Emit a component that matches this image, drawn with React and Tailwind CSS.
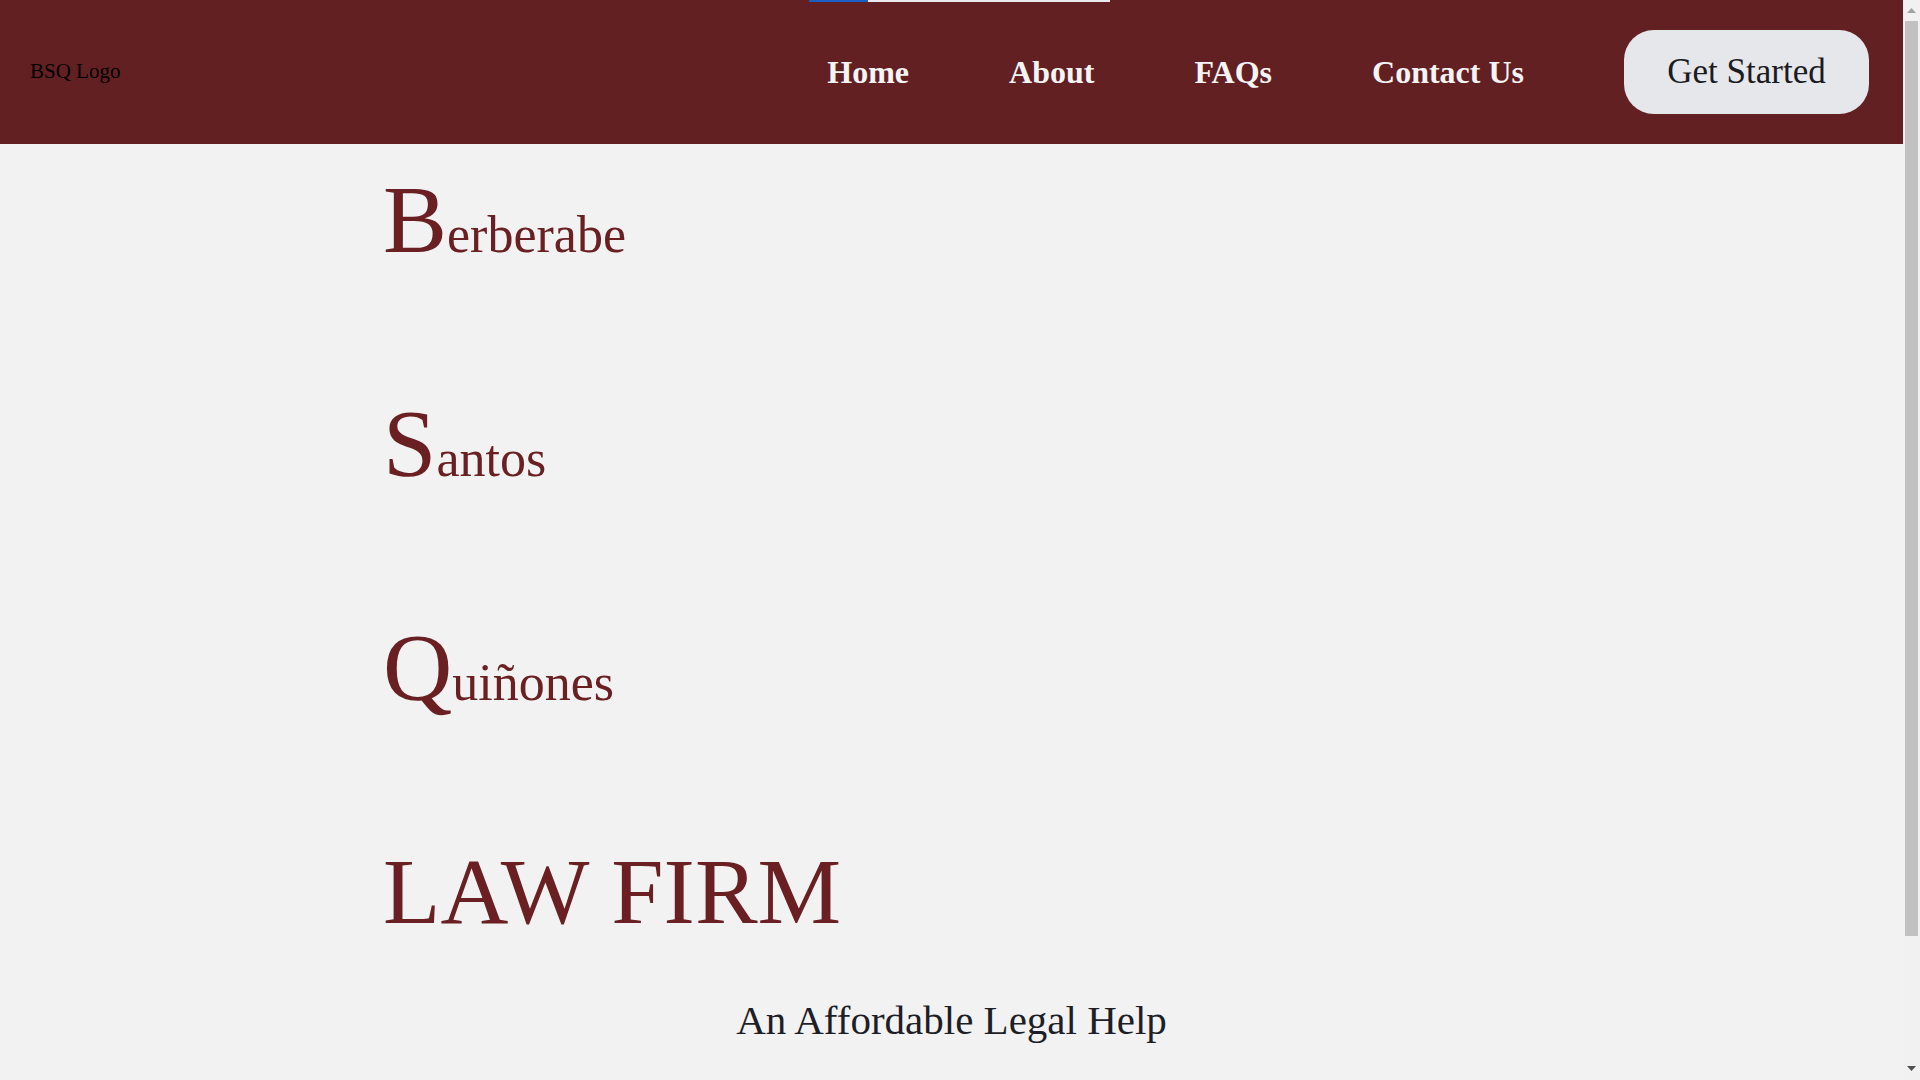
import React from 'react'

const navLinks = ['Home', 'About', 'FAQs', 'Contact Us']

const names = [
  { cap: 'B', rest: 'erberabe' },
  { cap: 'S', rest: 'antos' },
  { cap: 'Q', rest: 'uiñones' },
]

function Header() {
  return (
    <header className="relative flex h-[144px] items-center justify-between bg-[#632023] pl-[30px] pr-[34px]">
      {/* thin bar along the top edge */}
      <div className="absolute left-[809px] top-0 flex h-[2px]">
        <div className="w-[59px] bg-[#1a5fc4]" />
        <div className="w-[242px] bg-[#e9e9ee]" />
      </div>
      <div className="text-[21px] text-black">BSQ Logo</div>
      <nav className="flex items-center gap-[100px]">
        {navLinks.map((link) => (
          <a key={link} href="#" className="text-[32px] font-bold text-[#f4f4f6]">
            {link}
          </a>
        ))}
        <button className="h-[84px] w-[245px] rounded-[30px] bg-[#e5e7eb] text-[35px] text-[#1b1b22]">
          Get Started
        </button>
      </nav>
    </header>
  )
}

// window scrollbar as it shows in the capture
function ScrollBar() {
  return (
    <div className="fixed right-0 top-0 flex h-screen w-[17px] flex-col items-center bg-[#f1f1f1]">
      <svg width="9" height="6" viewBox="0 0 9 6" className="mt-[8px] shrink-0">
        <path d="M4.5 0L9 5H0z" fill="#a3a3a3" />
      </svg>
      <div className="mt-[7px] h-[915px] w-[13px] shrink-0 bg-[#c1c1c1]" />
      <div className="flex-1" />
      <svg width="9" height="6" viewBox="0 0 9 6" className="mb-[8px] shrink-0">
        <path d="M0 0h9L4.5 5z" fill="#505050" />
      </svg>
    </div>
  )
}

export default function App() {
  return (
    <div className="min-h-[1236px] bg-[#f2f2f2] font-['Liberation_Serif',serif]">
      <div className="mr-[17px]">
        <Header />
        <main className="pt-[28px]">
          <div className="flex flex-col gap-[128px] pl-[383px] text-[#6a2023]">
            {names.map((n) => (
              <div key={n.cap} className="text-[52px] leading-none">
                <span className="text-[96px] leading-none">{n.cap}</span>
                {n.rest}
              </div>
            ))}
            <div className="text-[94px] leading-none">LAW FIRM</div>
          </div>
          <p className="mt-[62px] text-center text-[41px] leading-none text-[#1e1e26]">
            An Affordable Legal Help
          </p>
        </main>
      </div>
      <ScrollBar />
    </div>
  )
}
